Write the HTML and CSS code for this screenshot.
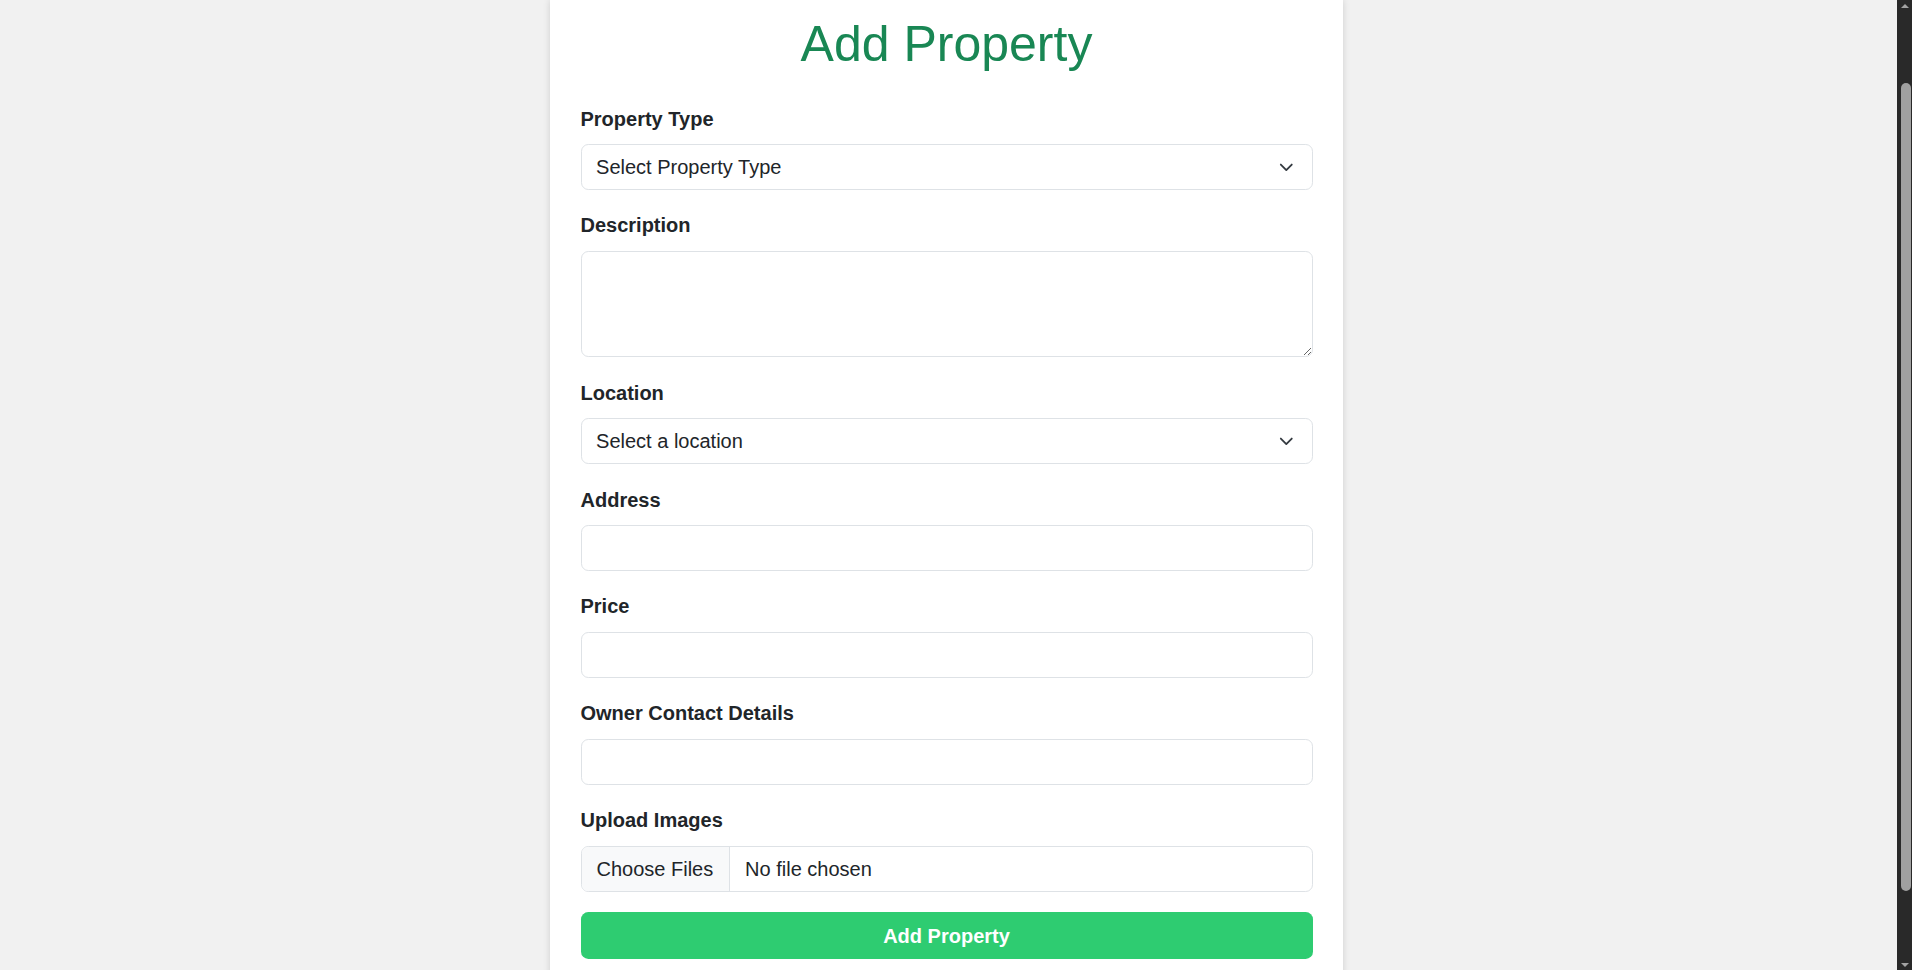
FILE: index.html
```html
<!DOCTYPE html>
<html lang="en">
<head>
<meta charset="utf-8">
<title>Add Property</title>
<link rel="stylesheet" href="styles.css">
</head>
<body>
<div class="screen">
  <main class="page">
    <div class="card">
      <h1 class="title">Add Property</h1>
      <form class="form">
        <div class="group">
          <label class="label">Property Type</label>
          <div class="field select">
            <span>Select Property Type</span>
            <svg class="chev" viewBox="0 0 16 16"><path d="m2 5 6 6 6-6" fill="none" stroke="#343a40" stroke-width="2" stroke-linecap="round" stroke-linejoin="round"/></svg>
          </div>
        </div>
        <div class="group">
          <label class="label">Description</label>
          <textarea class="textarea"></textarea>
        </div>
        <div class="group">
          <label class="label">Location</label>
          <div class="field select">
            <span>Select a location</span>
            <svg class="chev" viewBox="0 0 16 16"><path d="m2 5 6 6 6-6" fill="none" stroke="#343a40" stroke-width="2" stroke-linecap="round" stroke-linejoin="round"/></svg>
          </div>
        </div>
        <div class="group">
          <label class="label">Address</label>
          <div class="field"></div>
        </div>
        <div class="group">
          <label class="label">Price</label>
          <div class="field"></div>
        </div>
        <div class="group">
          <label class="label">Owner Contact Details</label>
          <div class="field"></div>
        </div>
        <div class="group">
          <label class="label">Upload Images</label>
          <div class="field file">
            <span class="file-btn">Choose Files</span>
            <span class="file-name">No file chosen</span>
          </div>
        </div>
        <button type="button" class="submit">Add Property</button>
      </form>
    </div>
  </main>
  <div class="scrollbar">
    <div class="arrow-box"><span class="arrow up"></span></div>
    <div class="track"><div class="thumb"></div></div>
    <div class="arrow-box"><span class="arrow down"></span></div>
  </div>
</div>
</body>
</html>
```
FILE: styles.css
```css
* { box-sizing: border-box; }
html, body {
  margin: 0;
  height: 970px;
  overflow: hidden;
}
body {
  font-family: "Liberation Sans", Arial, sans-serif;
  color: #212529;
}
.screen {
  display: flex;
  height: 970px;
}
.page {
  flex: 1;
  background: #f1f1f1;
  display: flex;
  justify-content: center;
  align-items: stretch;
  padding-right: 4px;
  overflow: hidden;
}
.card {
  width: 793px;
  min-height: 1100px;
  background: #fff;
  box-shadow: 0 0 7px rgba(0, 0, 0, 0.14);
  padding: 15px 30.5px 0;
}
.title {
  margin: 0 0 31px;
  text-align: center;
  font-weight: 400;
  font-size: 50px;
  line-height: 58.5px;
  color: #198754;
}
.form {
  display: flex;
  flex-direction: column;
}
.group {
  display: flex;
  flex-direction: column;
  margin-bottom: 21.4px;
}
.label {
  font-weight: 700;
  font-size: 20px;
  line-height: 29.25px;
  margin-bottom: 10px;
}
.field {
  height: 46.3px;
  border: 1px solid #dee2e6;
  border-radius: 7.3px;
  background: #fff;
  font-size: 20px;
  display: flex;
  align-items: center;
}
.select {
  justify-content: space-between;
  padding: 0 17.5px 0 14.6px;
}
.select span,
.file-name {
  padding-top: 2px;
}
.chev {
  width: 14.6px;
  height: 14.6px;
  display: block;
}
.textarea {
  height: 106.5px;
  border: 1px solid #dee2e6;
  border-radius: 7.3px;
  font-family: inherit;
  font-size: 20px;
  padding: 7px 14.6px;
  resize: vertical;
  outline: none;
  margin: 0;
}
.file {
  overflow: hidden;
}
.file-btn {
  align-self: stretch;
  display: flex;
  align-items: center;
  padding: 2px 14px 0 15px;
  background: #f8f9fa;
  border-right: 1px solid #dee2e6;
  width: 148px;
  white-space: nowrap;
}
.file-name {
  padding-left: 15.6px;
}
.submit {
  margin-top: -0.9px;
  height: 46.3px;
  border: 0;
  border-radius: 7.3px;
  background: #2ecc71;
  color: #fff;
  font-family: inherit;
  font-weight: 700;
  font-size: 20px;
  padding: 2px 0 0;
}
.scrollbar {
  width: 15px;
  background: #292929;
  display: flex;
  flex-direction: column;
}
.arrow-box {
  height: 17px;
  display: flex;
  justify-content: center;
  align-items: center;
  padding-left: 1px;
}
.arrow {
  width: 0;
  height: 0;
  border-left: 4.5px solid transparent;
  border-right: 4.5px solid transparent;
}
.arrow.up {
  border-bottom: 4.5px solid #a3a3a3;
  margin-bottom: 6px;
}
.arrow.down {
  border-top: 4.5px solid #a3a3a3;
  margin-top: 6px;
}
.track {
  flex: 1;
  padding: 66px 1px 0 4px;
}
.thumb {
  height: 808px;
  background: #a0a0a0;
  border-radius: 5px;
}
```
